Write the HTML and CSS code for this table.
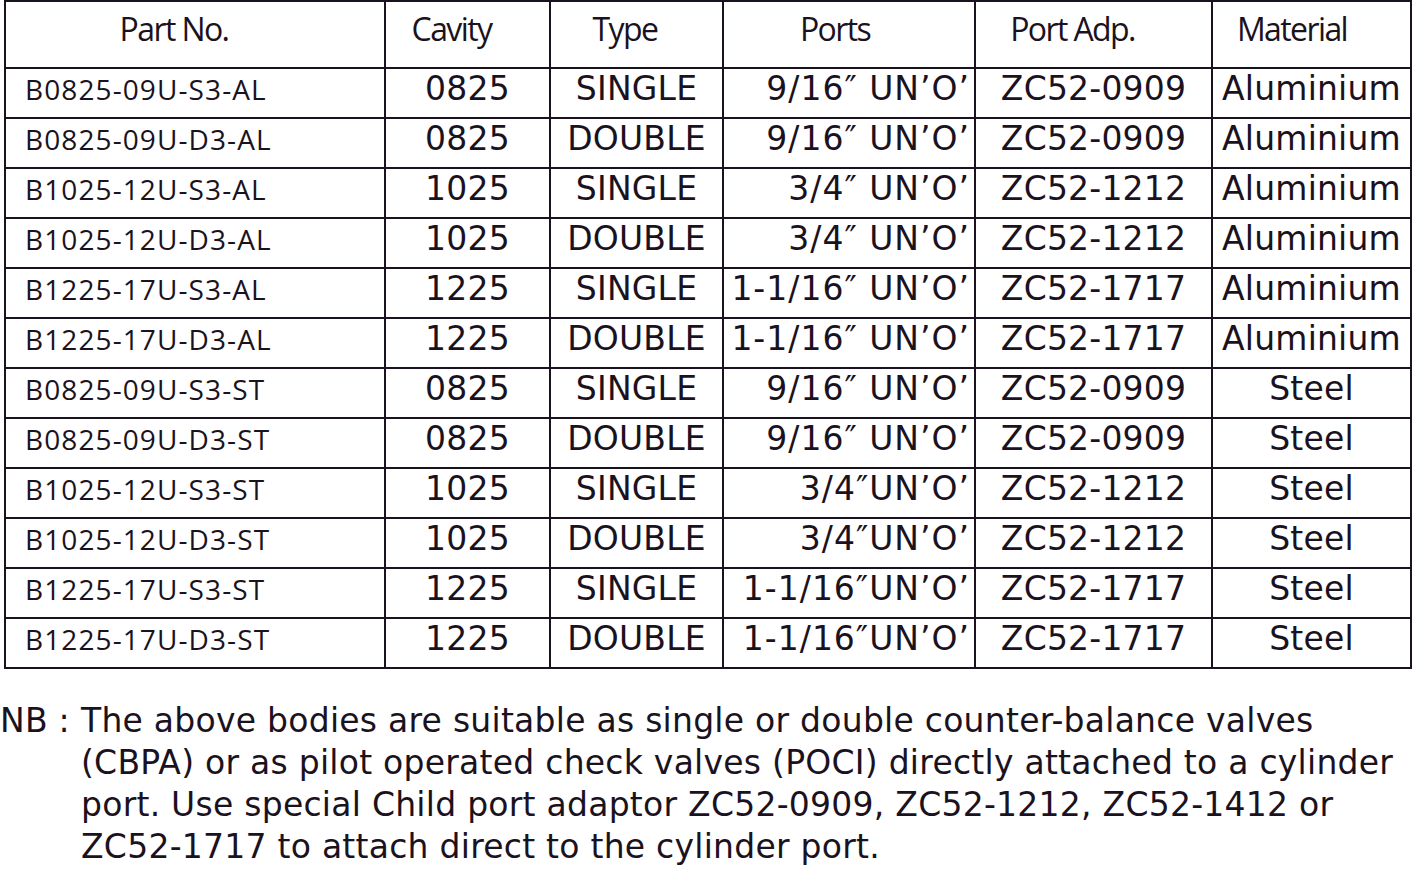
FILE: index.html
```html
<!DOCTYPE html>
<html lang="en">
<head>
<meta charset="utf-8">
<title>Bodies</title>
<link rel="stylesheet" href="styles.css">
</head>
<body>
<div class="page">
  <table class="parts">
    <colgroup>
      <col class="c-part"><col class="c-cav"><col class="c-type"><col class="c-ports"><col class="c-adp"><col class="c-mat">
    </colgroup>
    <thead>
      <tr>
        <th class="h-part">Part No.</th><th class="h-cav">Cavity</th><th class="h-type">Type</th><th class="h-ports">Ports</th><th class="h-adp">Port Adp.</th><th class="h-mat">Material</th>
      </tr>
    </thead>
    <tbody>
      <tr><td class="pn">B0825-09U-S3-AL</td><td>0825</td><td>SINGLE</td><td class="port">9/16″ UN’O’</td><td>ZC52-0909</td><td>Aluminium</td></tr>
      <tr><td class="pn">B0825-09U-D3-AL</td><td>0825</td><td>DOUBLE</td><td class="port">9/16″ UN’O’</td><td>ZC52-0909</td><td>Aluminium</td></tr>
      <tr><td class="pn">B1025-12U-S3-AL</td><td>1025</td><td>SINGLE</td><td class="port">3/4″ UN’O’</td><td>ZC52-1212</td><td>Aluminium</td></tr>
      <tr><td class="pn">B1025-12U-D3-AL</td><td>1025</td><td>DOUBLE</td><td class="port">3/4″ UN’O’</td><td>ZC52-1212</td><td>Aluminium</td></tr>
      <tr><td class="pn">B1225-17U-S3-AL</td><td>1225</td><td>SINGLE</td><td class="port">1-1/16″ UN’O’</td><td>ZC52-1717</td><td>Aluminium</td></tr>
      <tr><td class="pn">B1225-17U-D3-AL</td><td>1225</td><td>DOUBLE</td><td class="port">1-1/16″ UN’O’</td><td>ZC52-1717</td><td>Aluminium</td></tr>
      <tr><td class="pn">B0825-09U-S3-ST</td><td>0825</td><td>SINGLE</td><td class="port">9/16″ UN’O’</td><td>ZC52-0909</td><td>Steel</td></tr>
      <tr><td class="pn">B0825-09U-D3-ST</td><td>0825</td><td>DOUBLE</td><td class="port">9/16″ UN’O’</td><td>ZC52-0909</td><td>Steel</td></tr>
      <tr><td class="pn">B1025-12U-S3-ST</td><td>1025</td><td>SINGLE</td><td class="port">3/4″UN’O’</td><td>ZC52-1212</td><td>Steel</td></tr>
      <tr><td class="pn">B1025-12U-D3-ST</td><td>1025</td><td>DOUBLE</td><td class="port">3/4″UN’O’</td><td>ZC52-1212</td><td>Steel</td></tr>
      <tr><td class="pn">B1225-17U-S3-ST</td><td>1225</td><td>SINGLE</td><td class="port">1-1/16″UN’O’</td><td>ZC52-1717</td><td>Steel</td></tr>
      <tr><td class="pn">B1225-17U-D3-ST</td><td>1225</td><td>DOUBLE</td><td class="port">1-1/16″UN’O’</td><td>ZC52-1717</td><td>Steel</td></tr>
    </tbody>
  </table>
  <p class="note"><span class="nb">NB :</span><span class="note-text">The above bodies are suitable as single or double counter-balance valves (CBPA) or as pilot operated check valves (POCI) directly attached to a cylinder port. Use special Child port adaptor ZC52-0909, ZC52-1212, ZC52-1412 or ZC52-1717 to attach direct to the cylinder port.</span></p>
</div>
</body>
</html>
```

FILE: styles.css
```css
html, body {
  margin: 0;
  padding: 0;
  background: #ffffff;
}

.page {
  padding: 0 0 0 4px;
  color: #1b1220;
  font-family: "DejaVu Sans", "Liberation Sans", sans-serif;
}

.parts {
  width: 1406px;
  table-layout: fixed;
  border-collapse: collapse;
  border: 2px solid #1b1220;
}

.c-part { width: 380px; }
.c-cav { width: 165px; }
.c-type { width: 173px; }
.c-ports { width: 252px; }
.c-adp { width: 237px; }
.c-mat { width: 199px; }

.parts th,
.parts td {
  border: 2px solid #1b1220;
  white-space: nowrap;
  overflow: hidden;
  vertical-align: top;
}

.parts th {
  height: 44px;
  padding: 5px 0 16px 0;
  font-family: "Open Sans", "Noto Sans", sans-serif;
  font-weight: 400;
  font-size: 32px;
  line-height: 44px;
  letter-spacing: -1.6px;
  text-align: center;
}

.h-part { padding-right: 42px !important; }
.h-cav { padding-right: 32px !important; }
.h-type { padding-right: 23px !important; }
.h-ports { padding-right: 28px !important; }
.h-adp { padding-right: 42px !important; }
.h-mat { padding-right: 39px !important; }

.parts td {
  height: 40px;
  padding: 0 0 8px 0;
  font-size: 33px;
  line-height: 40px;
  letter-spacing: 0.2px;
  text-align: center;
}

.parts td.pn {
  text-align: left;
  padding-left: 19px;
  font-family: "Open Sans", "Noto Sans", sans-serif;
  font-size: 28px;
  letter-spacing: 1.1px;
}

.parts td.port {
  text-align: right;
  padding-right: 4px;
  letter-spacing: 1px;
}

.note {
  display: flex;
  margin: 31px 0 0 -4px;
  font-size: 33px;
  line-height: 42px;
  letter-spacing: 0.25px;
}

.nb {
  flex: 0 0 81px;
}

.note-text {
  flex: 1;
  padding-right: 4px;
}
```
